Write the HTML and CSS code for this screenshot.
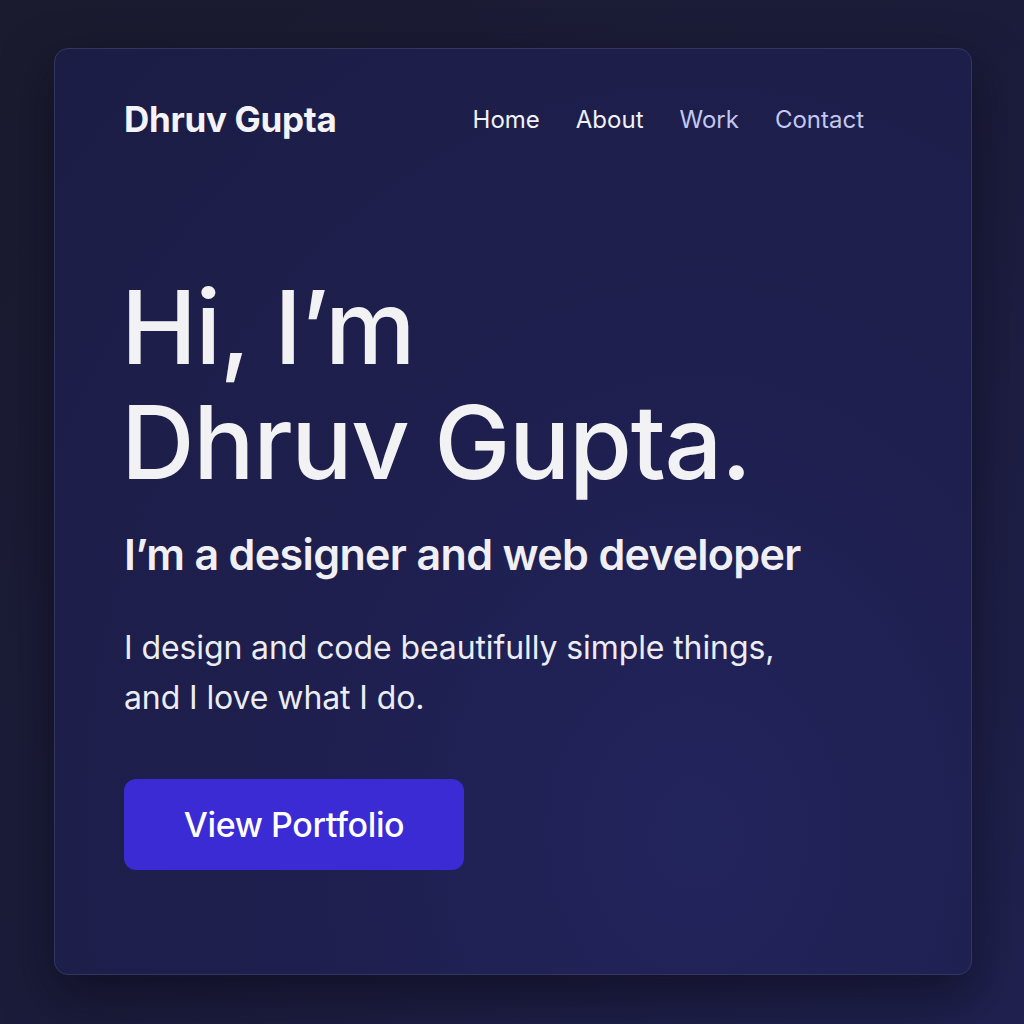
FILE: index.html
```html
<!DOCTYPE html>
<html lang="en">
<head>
<meta charset="utf-8">
<title>Dhruv Gupta</title>
<link rel="stylesheet" href="styles.css">
</head>
<body>
<main class="card">
  <header class="nav">
    <div class="logo">Dhruv Gupta</div>
    <nav class="links">
      <a class="link">Home</a>
      <a class="link">About</a>
      <a class="link muted">Work</a>
      <a class="link muted">Contact</a>
    </nav>
  </header>
  <section class="hero">
    <h1 class="title">Hi, I’m<br>Dhruv Gupta.</h1>
    <h2 class="subtitle">I’m a designer and web developer</h2>
    <p class="lead">I design and code beautifully simple things,<br>and I love what I do.</p>
    <a class="btn">View Portfolio</a>
  </section>
</main>
</body>
</html>
```
FILE: styles.css
```css
html, body { margin: 0; }
body {
  width: 1024px;
  height: 1024px;
  box-sizing: border-box;
  padding: 48px 52px 49px 54px;
  background: linear-gradient(135deg, #1a1b2e 0%, #1b1c3a 50%, #20214f 100%);
  font-family: Inter, "Noto Sans", sans-serif;
  overflow: hidden;
}
.card {
  height: 100%;
  box-sizing: border-box;
  border: 1px solid #33365f;
  border-radius: 14px;
  background: radial-gradient(ellipse at 70% 85%, #22245c 0%, #1e1f4e 45%, #1c1d45 100%);
  box-shadow: 0 20px 50px rgba(8, 8, 20, 0.55);
  padding: 0 0 0 69px;
  display: flex;
  flex-direction: column;
}
.nav {
  display: flex;
  align-items: center;
  justify-content: space-between;
  height: 140px;
  padding-right: 107px;
}
.logo {
  color: #f4f4f8;
  font-size: 35px;
  font-weight: 700;
  letter-spacing: -0.3px;
}
.links { display: flex; gap: 36px; }
.link {
  color: #f1f2f8;
  font-size: 24px;
  font-weight: 400;
}
.link.muted { color: #c3c8f0; }
.hero { padding-top: 81px; }
.title {
  margin: 0 0 0 -3px;
  color: #f2f2f4;
  font-size: 102px;
  font-weight: 500;
  line-height: 115px;
  letter-spacing: -1.4px;
}
.subtitle {
  margin: 29px 0 0;
  color: #f0f0f4;
  font-size: 43px;
  font-weight: 600;
  line-height: 50px;
  letter-spacing: -0.65px;
}
.lead {
  margin: 44px 0 0;
  color: #ececf3;
  font-size: 32px;
  font-weight: 400;
  line-height: 50px;
  letter-spacing: -0.1px;
}
.btn {
  display: flex;
  align-items: center;
  justify-content: center;
  margin-top: 56px;
  width: 340px;
  height: 91px;
  box-sizing: border-box;
  border-radius: 12px;
  background: #3a2bd4;
  color: #ffffff;
  font-size: 34px;
  font-weight: 500;
  letter-spacing: -0.4px;
}
```
